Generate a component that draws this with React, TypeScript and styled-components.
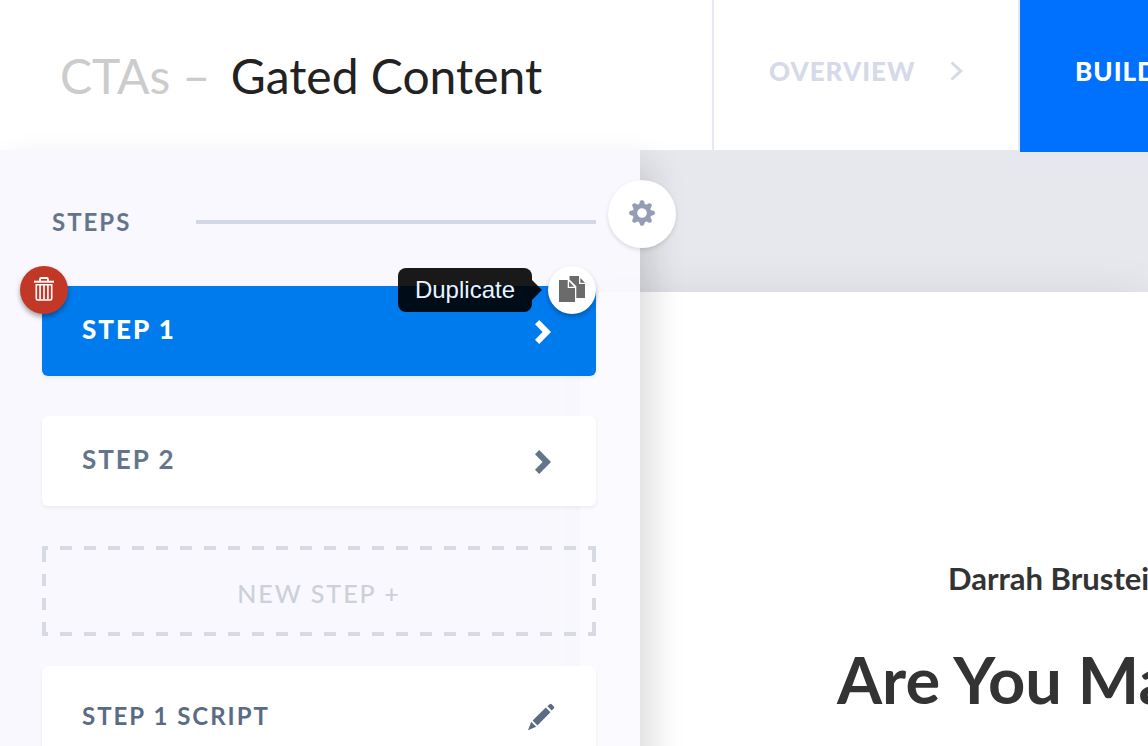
import React from "react";
import styled, { createGlobalStyle } from "styled-components";

const GlobalStyle = createGlobalStyle`
  *, *::before, *::after { box-sizing: border-box; }
  body { margin: 0; background: #fff; font-family: Lato, "Liberation Sans", sans-serif; }
  button { font: inherit; border: 0; padding: 0; cursor: pointer; }
  h1, h2, p { margin: 0; }
  svg { display: block; }
`;

const Page = styled.div`
  display: flex;
  flex-direction: column;
  height: 100vh;
  overflow: hidden;
`;

const Header = styled.header`
  display: flex;
  flex: none;
  height: 150px;
  background: #fff;
`;

const Breadcrumb = styled.h1`
  flex: 0 0 712px;
  padding: 48px 0 0 60px;
  font-size: 48px;
  line-height: 56px;
  font-weight: 400;
  color: #222;
  white-space: pre;
`;

const Crumb = styled.span`
  color: #ccc;
  margin-right: 8px;
`;

const Tabs = styled.nav`
  display: flex;
  flex: 1;
  min-width: 0;
`;

const Tab = styled.a<{ $active?: boolean }>`
  display: flex;
  align-items: center;
  justify-content: space-between;
  flex: 0 0 ${(p) => (p.$active ? 300 : 308)}px;
  height: ${(p) => (p.$active ? 152 : 150)}px;
  padding: 0 55px ${(p) => (p.$active ? 10 : 8)}px;
  border-left: ${(p) => (p.$active ? 0 : 2)}px solid #e6e9ef;
  border-right: ${(p) => (p.$active ? 0 : 2)}px solid #e6e9ef;
  background: ${(p) => (p.$active ? "#0070ff" : "#fff")};
  color: ${(p) => (p.$active ? "#fff" : "#d5d9e8")};
  font-size: 26px;
  line-height: 32px;
  font-weight: 900;
  letter-spacing: 1px;
  text-decoration: none;
  position: relative;
  z-index: ${(p) => (p.$active ? 3 : 0)};
`;

const Workspace = styled.div`
  display: grid;
  grid-template-columns: 640px 1fr;
  grid-template-rows: 1fr;
  flex: 1;
  min-height: 0;
`;

const Stage = styled.main`
  grid-area: 1 / 1 / 2 / 3;
  display: flex;
  padding: 142px 0 0 580px;
  background: #e7e8ed;
  overflow: hidden;
`;

const Canvas = styled.article`
  flex: 1;
  min-width: 0;
  padding: 266px 0 0 257px;
  background: #fff;
  box-shadow: 0 0 40px rgba(0, 0, 0, 0.08);
  color: #333;
  font-weight: 700;
  white-space: nowrap;
`;

const Author = styled.p`
  padding-left: 111px;
  font-size: 31px;
  line-height: 40px;
`;

const Headline = styled.h2`
  padding-top: 41px;
  font-size: 65px;
  line-height: 80px;
`;

const Sidebar = styled.aside`
  grid-area: 1 / 1 / 2 / 2;
  position: relative;
  z-index: 2;
  padding: 56px 44px 0 42px;
  background: rgba(250, 250, 255, 0.9);
  box-shadow: 12px 14px 32px rgba(0, 0, 0, 0.14);
`;

const SectionTitle = styled.h2`
  display: flex;
  align-items: center;
  justify-content: space-between;
  margin-bottom: 48px;
  padding-left: 10px;
  font-size: 24px;
  line-height: 32px;
  font-weight: 700;
  letter-spacing: 2px;
  color: #64758b;
`;

const Rule = styled.span`
  width: 400px;
  height: 4px;
  background: #d3d7e7;
`;

const StepList = styled.div`
  display: flex;
  flex-direction: column;
  gap: 40px;
  margin-bottom: 30px;
`;

const StepItem = styled.div`
  position: relative;
  display: flex;
`;

const StepButton = styled.button<{ $active?: boolean }>`
  display: flex;
  flex: 1;
  align-items: center;
  justify-content: space-between;
  height: 90px;
  padding: 0 44px 4px 40px;
  border-radius: 6px;
  background: ${(p) => (p.$active ? "#007bee" : "#fff")};
  color: ${(p) => (p.$active ? "#fff" : "#64758b")};
  box-shadow: 0 2px 4px rgba(0, 0, 0, 0.06);
  font-size: 26px;
  line-height: 32px;
  font-weight: ${(p) => (p.$active ? 900 : 700)};
  letter-spacing: 2px;

  svg { margin-top: 6px; }
`;

const RoundButton = styled.button<{ $danger?: boolean }>`
  position: absolute;
  top: -20px;
  ${(p) => (p.$danger ? "left: -22px;" : "right: 0;")}
  display: grid;
  place-items: center;
  width: 48px;
  height: 48px;
  padding-bottom: 2px;
  border-radius: 50%;
  background: ${(p) => (p.$danger ? "#c23827" : "#fff")};
  box-shadow: 0 3px 5px rgba(0, 0, 0, ${(p) => (p.$danger ? 0.35 : 0.25)});
`;

const Tooltip = styled.span`
  position: absolute;
  top: -18px;
  right: 64px;
  padding: 0 17px;
  border-radius: 8px;
  background: rgba(0, 0, 0, 0.9);
  color: #e8f4ff;
  font-family: "Liberation Sans", sans-serif;
  font-size: 24px;
  line-height: 44px;

  &::after {
    content: "";
    position: absolute;
    left: 100%;
    top: 12px;
    border: 10px solid transparent;
    border-right: 0;
    border-left-color: rgba(0, 0, 0, 0.9);
  }
`;

const NewStep = styled.button`
  --dash: #d7dae1;
  height: 90px;
  padding-top: 3px;
  color: #cdd0d6;
  font-size: 25px;
  line-height: 32px;
  font-weight: 500;
  letter-spacing: 2px;
  background:
    repeating-linear-gradient(90deg, var(--dash) 0 6px, transparent 6px 18px, var(--dash) 18px 24px) top / 100% 4px no-repeat,
    repeating-linear-gradient(90deg, var(--dash) 0 6px, transparent 6px 18px, var(--dash) 18px 24px) bottom / 100% 4px no-repeat,
    repeating-linear-gradient(180deg, transparent 0 4px, var(--dash) 4px 16px, transparent 16px 24px) left / 4px 100% no-repeat,
    repeating-linear-gradient(180deg, transparent 0 4px, var(--dash) 4px 16px, transparent 16px 24px) right / 4px 100% no-repeat;
`;

const ScriptCard = styled.button`
  display: flex;
  align-items: flex-start;
  justify-content: space-between;
  width: 100%;
  height: 200px;
  padding: 34px 41px 0 40px;
  border-radius: 6px;
  background: #fff;
  box-shadow: 0 2px 4px rgba(0, 0, 0, 0.06);
  color: #5a6b84;
  font-size: 24px;
  line-height: 32px;
  font-weight: 700;
  letter-spacing: 2px;

  svg { margin-top: 3px; }
`;

const SettingsButton = styled.button`
  position: absolute;
  top: 30px;
  right: -36px;
  display: grid;
  place-items: center;
  width: 68px;
  height: 68px;
  padding-bottom: 2px;
  border-radius: 50%;
  background: #fff;
  box-shadow: 0 2px 4px rgba(0, 0, 0, 0.12);
`;

const ThinChevron = () => (
  <svg width="13" height="20" viewBox="0 0 13 20" fill="none" stroke="currentColor" strokeWidth="3" aria-hidden="true">
    <path d="M1.5 1.5 10.8 10 1.5 18.5" />
  </svg>
);

const BoldChevron = () => (
  <svg width="18" height="26" viewBox="0 0 18 26" fill="currentColor" aria-hidden="true">
    <path d="M5.2 1 17 13 5.2 25 1 20.8 8.6 13 1 5.2Z" />
  </svg>
);

const TrashIcon = () => (
  <svg width="20" height="24" viewBox="0 0 20 24" fill="none" stroke="#fff" aria-hidden="true">
    <path d="M0 4.7h20" strokeWidth="2" />
    <path d="M6 4.5V2.2Q6 1 7.2 1h5.6Q14 1 14 2.2v2.3" strokeWidth="1.8" />
    <path d="M2.3 7.8h15.4v13.7q0 1.5-1.5 1.5H3.8q-1.5 0-1.5-1.5z" strokeWidth="1.6" />
    <path d="M6.1 8v14.5M10 8v14.5M13.9 8v14.5" strokeWidth="1.6" />
  </svg>
);

const DuplicateIcon = () => (
  <svg width="26" height="26" viewBox="0 0 26 26" fill="#6b6b6b" aria-hidden="true">
    <path d="M0 4h8.7v8H16v14H0z" />
    <path d="M10 5.5 15.2 10.7H10z" />
    <path d="M10.5 0H20v8h6v14h-8.7V10.3L10.5 3.5z" />
    <path d="M21.3 2 26 6.7h-4.7z" />
  </svg>
);

const teeth = [0, 45, 90, 135, 180, 225, 270, 315];

const GearIcon = () => (
  <svg width="26" height="26" viewBox="-13 -13 26 26" fill="#949db5" aria-hidden="true">
    <circle r="7.1" fill="none" stroke="#949db5" strokeWidth="4.6" />
    {teeth.map((angle) => (
      <path key={angle} transform={`rotate(${angle})`} d="M-3-8.8-1.9-11.8Q-1.5-12.8-.6-12.8H.6Q1.5-12.8 1.9-11.8L3-8.8Z" />
    ))}
  </svg>
);

const PencilIcon = () => (
  <svg width="28" height="28" viewBox="0 0 28 28" fill="currentColor" aria-hidden="true">
    <path d="M20.4 3.3 22.6 1.2Q23.6.3 24.6 1.2L26.8 3.4Q27.7 4.4 26.8 5.4L24.7 7.6Z" />
    <path d="M18.8 4.6 23.4 9.2 10.4 22.4 5.6 17.6Z" />
    <path d="M4.2 18.8 9.2 23.8 1 27.2Z" />
  </svg>
);

export default function App() {
  return (
    <>
      <GlobalStyle />
      <Page>
        <Header>
          <Breadcrumb><Crumb>CTAs – </Crumb>Gated Content</Breadcrumb>
          <Tabs aria-label="Sections">
            <Tab href="#overview">OVERVIEW<ThinChevron /></Tab>
            <Tab href="#build" $active aria-current="page">BUILD</Tab>
          </Tabs>
        </Header>
        <Workspace>
          <Sidebar>
            <SectionTitle>STEPS<Rule /></SectionTitle>
            <StepList>
              <StepItem>
                <StepButton $active>STEP 1<BoldChevron /></StepButton>
                <RoundButton $danger aria-label="Delete step"><TrashIcon /></RoundButton>
                <RoundButton aria-label="Duplicate step"><DuplicateIcon /></RoundButton>
                <Tooltip role="tooltip">Duplicate</Tooltip>
              </StepItem>
              <StepItem>
                <StepButton>STEP 2<BoldChevron /></StepButton>
              </StepItem>
              <NewStep>NEW STEP +</NewStep>
            </StepList>
            <ScriptCard>STEP 1 SCRIPT<PencilIcon /></ScriptCard>
            <SettingsButton aria-label="Settings"><GearIcon /></SettingsButton>
          </Sidebar>
          <Stage>
            <Canvas>
              <Author>Darrah Brustein</Author>
              <Headline>Are You Ma</Headline>
            </Canvas>
          </Stage>
        </Workspace>
      </Page>
    </>
  );
}
